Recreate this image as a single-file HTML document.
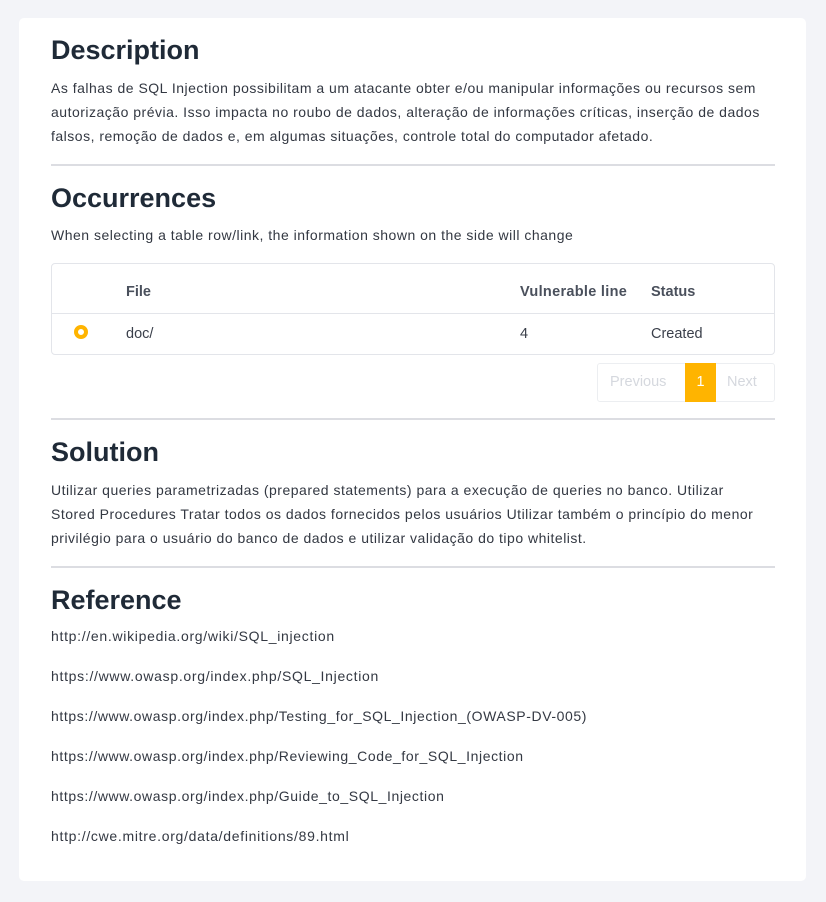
<!DOCTYPE html>
<html><head><meta charset="utf-8"><style>
body{margin:0;background:#f3f4f8;width:826px;height:902px;position:relative;font-family:"Liberation Sans",sans-serif;color:#333842;}
.card{position:absolute;left:19px;top:18px;width:787px;height:863px;background:#fff;border-radius:5px;}
.a{position:absolute;left:51px;white-space:nowrap;}
h2{margin:0;font-size:27px;font-weight:bold;color:#1f2a37;position:absolute;left:51px;line-height:32px;letter-spacing:0px}
.t{font-size:14px;line-height:24px;letter-spacing:0.5px}
.hr{position:absolute;left:51px;width:724px;height:2px;background:#dcdde2;}
.tbl{position:absolute;left:51px;top:263px;width:722px;height:90px;border:1px solid #e3e5ea;border-radius:4px;}
.c{position:absolute;font-size:14.5px;color:#3a3f4a;}
.h{font-weight:bold;color:#4a505c;}
</style></head><body>
<div class="card"></div>
<h2 style="top:34px">Description</h2>
<div class="a t" style="top:76px">As falhas de SQL Injection possibilitam a um atacante obter e/ou manipular informações ou recursos sem<br>autorização prévia. Isso impacta no roubo de dados, alteração de informações críticas, inserção de dados<br>falsos, remoção de dados e, em algumas situações, controle total do computador afetado.</div>
<div class="hr" style="top:164px"></div>
<h2 style="top:182px">Occurrences</h2>
<div class="a t" style="top:223px">When selecting a table row/link, the information shown on the side will change</div>
<div class="tbl">
 <div style="position:absolute;left:0;right:0;top:49px;height:1px;background:#e3e5ea"></div>
 <div class="c h" style="left:74px;top:20px">File</div>
 <div class="c h" style="left:468px;top:20px;letter-spacing:0.3px">Vulnerable line</div>
 <div class="c h" style="left:599px;top:20px">Status</div>
 <div style="position:absolute;left:22px;top:61px;width:6px;height:6px;border:4px solid #ffb400;border-radius:50%;background:#fff"></div>
 <div class="c" style="left:74px;top:62px">doc/</div>
 <div class="c" style="left:468px;top:62px">4</div>
 <div class="c" style="left:599px;top:62px">Created</div>
</div>
<div style="position:absolute;left:597px;top:363px;width:176px;height:37px;border:1px solid #eceef1;border-radius:3px;"></div>
<div class="c" style="left:610px;top:374px;color:#d5d8de">Previous</div>
<div style="position:absolute;left:685px;top:363px;width:31px;height:39px;background:#ffb400;color:#fff;font-size:14.5px;text-align:center;line-height:39px">1</div>
<div class="c" style="left:727px;top:374px;color:#d5d8de">Next</div>
<div class="hr" style="top:418px"></div>
<h2 style="top:436px">Solution</h2>
<div class="a t" style="top:478px">Utilizar queries parametrizadas (prepared statements) para a execução de queries no banco. Utilizar<br>Stored Procedures Tratar todos os dados fornecidos pelos usuários Utilizar também o princípio do menor<br>privilégio para o usuário do banco de dados e utilizar validação do tipo whitelist.</div>
<div class="hr" style="top:566px"></div>
<h2 style="top:584px">Reference</h2>
<div class="a t" style="top:624px;letter-spacing:0.7px">http://en.wikipedia.org/wiki/SQL_injection</div>
<div class="a t" style="top:664px;letter-spacing:0.7px">https://www.owasp.org/index.php/SQL_Injection</div>
<div class="a t" style="top:704px;letter-spacing:0.6px">https://www.owasp.org/index.php/Testing_for_SQL_Injection_(OWASP-DV-005)</div>
<div class="a t" style="top:744px;letter-spacing:0.6px">https://www.owasp.org/index.php/Reviewing_Code_for_SQL_Injection</div>
<div class="a t" style="top:784px;letter-spacing:0.6px">https://www.owasp.org/index.php/Guide_to_SQL_Injection</div>
<div class="a t" style="top:824px;letter-spacing:0.7px">http://cwe.mitre.org/data/definitions/89.html</div>
</body></html>
